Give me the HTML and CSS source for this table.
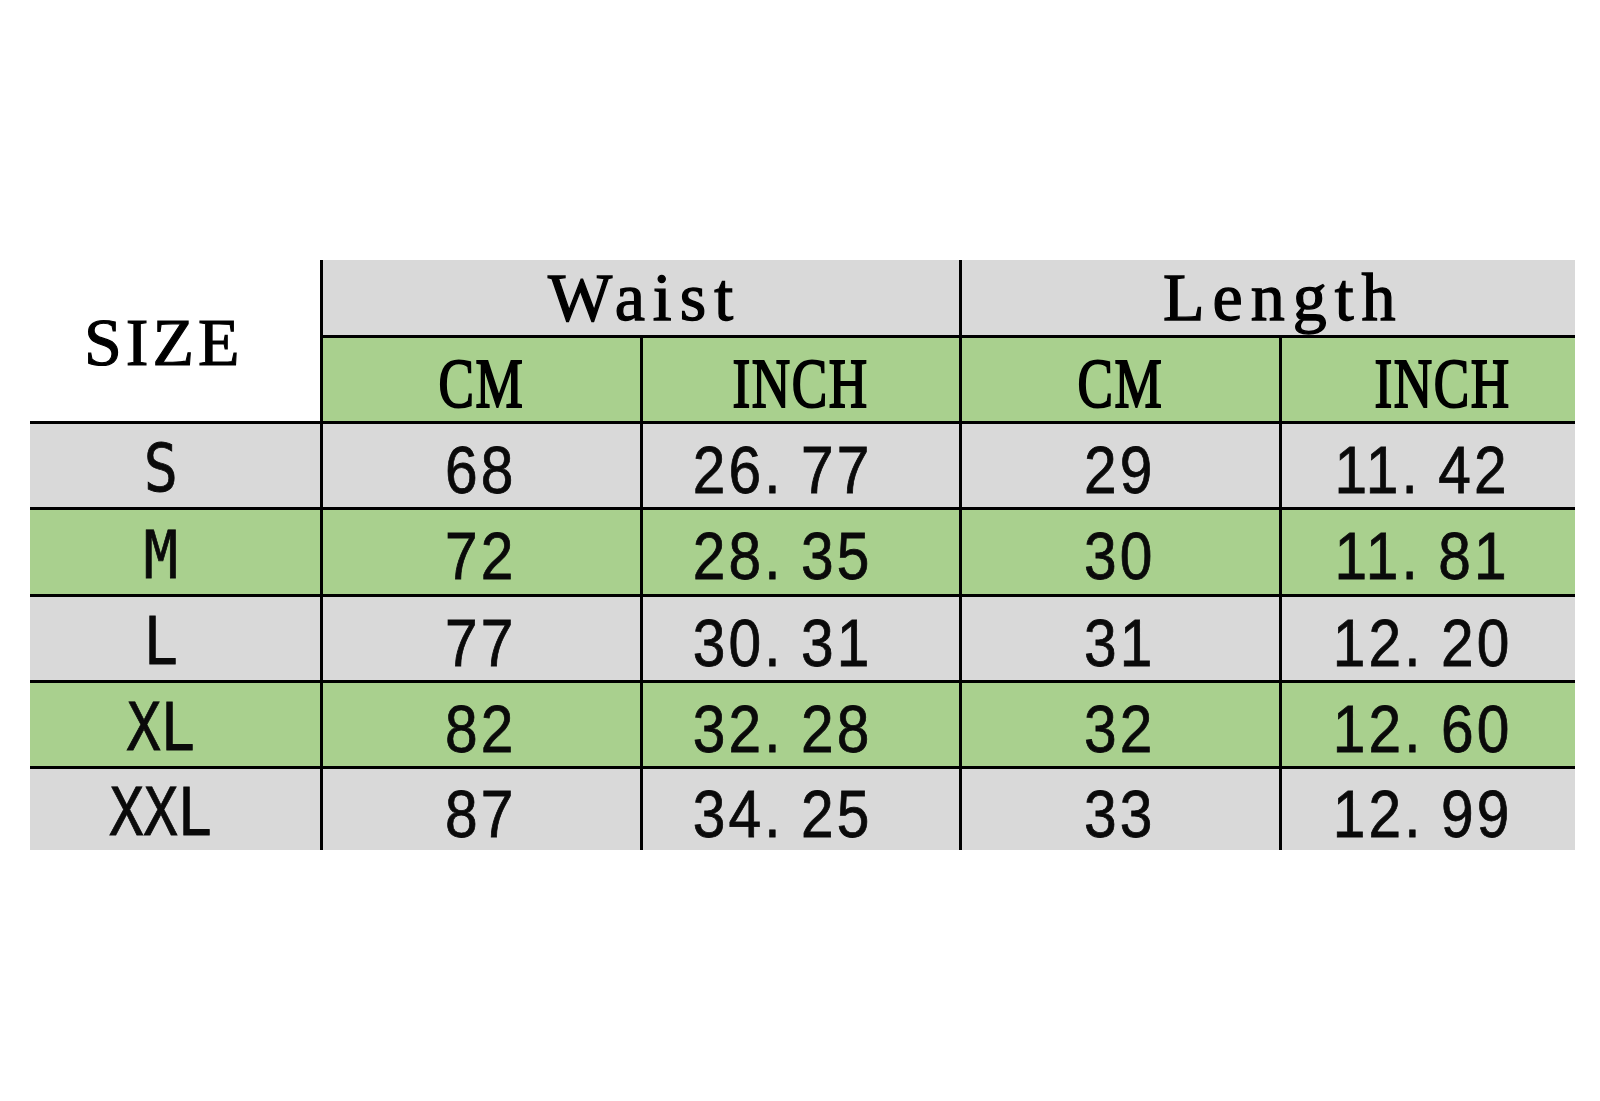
FILE: index.html
```html
<!DOCTYPE html>
<html lang="en">
<head>
<meta charset="utf-8">
<title>Size chart</title>
<link rel="stylesheet" href="styles.css">
</head>
<body>
<div class="chart">
  <table class="sizes">
    <colgroup>
      <col class="c-size">
      <col class="c-wcm">
      <col class="c-win">
      <col class="c-lcm">
      <col class="c-lin">
    </colgroup>
    <thead>
      <tr class="h1">
        <th rowspan="2" class="size-head"><span class="serif size-txt">SIZE</span></th>
        <th colspan="2" class="vl grey"><span class="serif group">Waist</span></th>
        <th colspan="2" class="vl grey group-len"><span class="serif group">Length</span></th>
      </tr>
      <tr class="h2">
        <th class="vl green ht"><span class="serif unit">CM</span></th>
        <th class="vl green ht"><span class="serif unit">INCH</span></th>
        <th class="vl green ht"><span class="serif unit">CM</span></th>
        <th class="vl green ht last-unit"><span class="serif unit">INCH</span></th>
      </tr>
    </thead>
    <tbody>
      <tr class="r r-grey r1">
        <td class="lc"><span class="lbl">S</span></td>
        <td class="vl"><span class="num">68</span></td>
        <td class="vl wi"><span class="num">26<span class="pt">.</span>77</span></td>
        <td class="vl"><span class="num">29</span></td>
        <td class="vl li"><span class="num">11<span class="pt">.</span>42</span></td>
      </tr>
      <tr class="r r-green r2">
        <td class="lc"><span class="lbl">M</span></td>
        <td class="vl"><span class="num">72</span></td>
        <td class="vl wi"><span class="num">28<span class="pt">.</span>35</span></td>
        <td class="vl"><span class="num">30</span></td>
        <td class="vl li"><span class="num">11<span class="pt">.</span>81</span></td>
      </tr>
      <tr class="r r-grey r3">
        <td class="lc"><span class="lbl">L</span></td>
        <td class="vl"><span class="num">77</span></td>
        <td class="vl wi"><span class="num">30<span class="pt">.</span>31</span></td>
        <td class="vl"><span class="num">31</span></td>
        <td class="vl li"><span class="num">12<span class="pt">.</span>20</span></td>
      </tr>
      <tr class="r r-green r4">
        <td class="lc"><span class="lbl">XL</span></td>
        <td class="vl"><span class="num">82</span></td>
        <td class="vl wi"><span class="num">32<span class="pt">.</span>28</span></td>
        <td class="vl"><span class="num">32</span></td>
        <td class="vl li"><span class="num">12<span class="pt">.</span>60</span></td>
      </tr>
      <tr class="r r-grey r5">
        <td class="lc"><span class="lbl">XXL</span></td>
        <td class="vl"><span class="num">87</span></td>
        <td class="vl wi"><span class="num">34<span class="pt">.</span>25</span></td>
        <td class="vl"><span class="num">33</span></td>
        <td class="vl li"><span class="num">12<span class="pt">.</span>99</span></td>
      </tr>
    </tbody>
  </table>
</div>
</body>
</html>
```

FILE: styles.css
```css
html, body {
  margin: 0;
  padding: 0;
  background: #ffffff;
}

.chart {
  padding: 260px 0 0 30px;
}

.sizes {
  border-collapse: collapse;
  table-layout: fixed;
  width: 1545px;
  color: #000;
}

.c-size { width: 291px; }
.c-wcm { width: 320px; }
.c-win { width: 319px; }
.c-lcm { width: 320px; }
.c-lin { width: 295px; }

.sizes th,
.sizes td {
  padding: 0;
  border: 0;
  text-align: center;
  vertical-align: middle;
  font-weight: normal;
}

.vl {
  border-left: 3px solid #000 !important;
}

.grey { background: #d9d9d9; }
.green { background: #a9d08e; }

.size-head {
  background: #ffffff;
  border-bottom: 3px solid #000 !important;
  padding-right: 22px !important;
  padding-top: 4px !important;
}

.h1 { height: 76px; }
.h2 { height: 86px; }
.r1 { height: 86px; }
.r2 { height: 87px; }
.r3 { height: 86px; }
.r4 { height: 86px; }
.r5 { height: 83px; }

.ht {
  border-top: 3px solid #000 !important;
  padding-top: 10px !important;
}

.r td {
  border-top: 3px solid #000;
  padding-top: 8px;
}

.r td.lc { padding-right: 28px; }
.r td.wi { padding-right: 36px; }
.r td.li { padding-right: 12px; }

.r-grey td { background: #d9d9d9; }
.r-green td { background: #a9d08e; }

.serif {
  font-family: "Liberation Serif", "Times New Roman", serif;
  display: inline-block;
  -webkit-text-stroke: 1.3px #000;
  line-height: 1;
}

.size-txt {
  font-size: 68px;
  letter-spacing: 4px;
  -webkit-text-stroke: 1.1px #000;
}

.group {
  font-size: 68px;
  letter-spacing: 8px;
  padding-left: 8px;
}

.group-len .group {
  padding-left: 30px;
}

.unit {
  font-size: 70px;
  letter-spacing: 2px;
  transform: scaleX(0.76);
  -webkit-text-stroke: 2px #000;
}

.last-unit .unit {
  margin-left: 28px;
}

.num {
  display: inline-block;
  font-family: "Liberation Sans", Arial, sans-serif;
  font-size: 67px;
  line-height: 1;
  letter-spacing: 3.5px;
  transform: scaleX(0.875);
  color: #0a0a0a;
  -webkit-text-stroke: 0.8px #0a0a0a;
}

.pt {
  padding-right: 20px;
}

.lbl {
  display: inline-block;
  font-family: "DejaVu Sans Mono", monospace;
  font-size: 66px;
  line-height: 1;
  transform: scaleX(0.86);
  color: #0a0a0a;
  -webkit-text-stroke: 0.8px #0a0a0a;
}
```
